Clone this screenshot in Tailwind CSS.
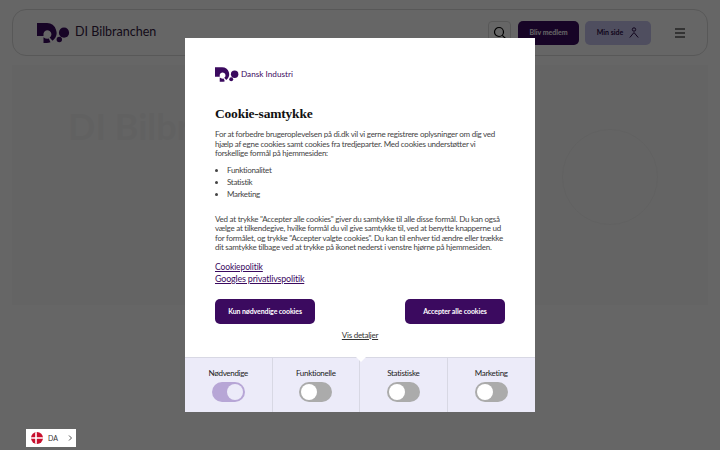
<!DOCTYPE html>
<html lang="da">
<head>
    <meta charset="UTF-8">
    <title>DI Bilbranchen</title>
    <script src="https://cdn.jsdelivr.net/npm/@tailwindcss/browser@4"></script>
</head>
<body class="bg-white h-[450px] overflow-hidden font-['Lato',sans-serif]">
    <!-- Page behind the dialog -->
    <div class="px-3 pt-[9px]">
        <header class="h-[47px] border border-[#dcdcdc] rounded-[14px] flex items-center pl-[24px] pr-[20px]">
            <svg class="w-[33px] h-[20px] text-[#3b0a5f]" viewBox="0 0 33 20" fill="currentColor">
                <path fill-rule="evenodd" d="M0 0H9.5A9.8 9.8 0 0 1 15.5 17.7L12.6 14.6A4 4 0 1 0 6.5 10.5V13H0ZM6.5 14.2A6.5 6.5 0 0 0 11.8 15.6L13.5 19.2A10 10 0 0 1 9.5 20H6.5Z"/>
                <circle cx="27" cy="9.7" r="5.1"/>
                <circle cx="22.3" cy="16.5" r="2.7"/>
            </svg>
            <span class="ml-[5px] text-[12.5px] text-[#33203f]">DI Bilbranchen</span>
            <div class="ml-auto flex items-center">
                <div class="w-[23px] h-[23px] mr-[7px] border border-[#dcdcdc] rounded flex items-center justify-center">
                    <svg class="w-[14px] h-[14px] text-black" viewBox="0 0 14 14" fill="none" stroke="currentColor" stroke-width="1.2">
                        <circle cx="6" cy="6" r="4.5"/>
                        <path d="M9.3 9.3L13 13"/>
                    </svg>
                </div>
                <button class="w-[61px] h-[24px] rounded-[5px] bg-[#3b0a5f] text-white text-[7px] font-bold">Bliv medlem</button>
                <button class="w-[66px] h-[24px] ml-[6px] rounded-[5px] bg-[#c5c3ee] text-[#2a0a45] text-[7px] font-bold flex items-center justify-center gap-[6px]">
                    Min side
                    <svg class="w-[10px] h-[11px]" viewBox="0 0 10 11" fill="none" stroke="currentColor" stroke-width="1">
                        <circle cx="5" cy="2.5" r="1.7"/>
                        <path d="M0.8 10.5L5 5.5L9.2 10.5"/>
                    </svg>
                </button>
                <svg class="w-[10px] h-[10px] ml-[24px] mr-[2px] text-black" viewBox="0 0 10 10" stroke="currentColor" stroke-width="1.2">
                    <path d="M0 1H10M0 5H10M0 9H10"/>
                </svg>
            </div>
        </header>
        <section class="mt-[9px] h-[240px] bg-[#fafafa] pl-[56px] pt-[34px] flex justify-between">
            <h1 class="text-[36px] text-[#f3f3f3] font-bold">DI Bilbranchen</h1>
            <div class="w-[96px] h-[96px] mr-[50px] mt-[30px] rounded-full border border-[#f3f3f3]"></div>
        </section>
    </div>

    <!-- Overlay -->
    <div class="absolute inset-0 bg-black/60"></div>

    <!-- Cookie dialog -->
    <div class="absolute left-[185px] top-[38px] w-[350px] h-[374px] bg-white flex flex-col">
        <div class="px-[30px] pt-[29px] flex-1">
            <div class="flex items-center">
                <svg class="w-[24px] h-[15px] text-[#3b0a5f]" viewBox="0 0 33 20" fill="currentColor">
                    <path fill-rule="evenodd" d="M0 0H9.5A9.8 9.8 0 0 1 15.5 17.7L12.6 14.6A4 4 0 1 0 6.5 10.5V13H0ZM6.5 14.2A6.5 6.5 0 0 0 11.8 15.6L13.5 19.2A10 10 0 0 1 9.5 20H6.5Z"/>
                    <circle cx="27" cy="9.7" r="5.1"/>
                    <circle cx="22.3" cy="16.5" r="2.7"/>
                </svg>
                <span class="ml-[2px] text-[8.2px] text-[#3b0a5f]">Dansk Industri</span>
            </div>
            <h2 class="mt-[22px] text-[13.5px] tracking-[-0.2px] leading-[20px] font-bold text-[#111] font-['Liberation_Serif',serif]">Cookie-samtykke</h2>
            <p class="mt-[6px] text-[8px] tracking-[-0.25px] leading-[9.5px] text-[#444]">For at forbedre brugeroplevelsen på di.dk vil vi gerne registrere oplysninger om dig ved hjælp af egne cookies samt cookies fra tredjeparter. Med cookies understøtter vi forskellige formål på hjemmesiden:</p>
            <ul class="mt-[5px] text-[8px] tracking-[-0.3px] leading-[12px] text-[#444] list-disc pl-[12px]">
                <li>Funktionalitet</li>
                <li>Statistik</li>
                <li>Marketing</li>
            </ul>
            <p class="mt-[15px] text-[8px] tracking-[-0.25px] leading-[9.5px] text-[#444]">Ved at trykke "Accepter alle cookies" giver du samtykke til alle disse formål. Du kan også vælge at tilkendegive, hvilke formål du vil give samtykke til, ved at benytte knapperne ud for formålet, og trykke "Accepter valgte cookies". Du kan til enhver tid ændre eller trække dit samtykke tilbage ved at trykke på ikonet nederst i venstre hjørne på hjemmesiden.</p>
            <a class="block mt-[9px] text-[8.5px] tracking-[-0.1px] leading-[11px] text-[#3b0a5f] underline">Cookiepolitik</a>
            <a class="block text-[9px] tracking-[-0.2px] leading-[11px] text-[#3b0a5f] underline">Googles privatlivspolitik</a>
            <div class="mt-[15px] flex justify-between">
                <button class="w-[100px] h-[25px] rounded-[5px] bg-[#3b0a5f] text-white text-[7px] tracking-[-0.1px] font-bold">Kun nødvendige cookies</button>
                <button class="w-[100px] h-[25px] rounded-[5px] bg-[#3b0a5f] text-white text-[7px] tracking-[-0.1px] font-bold">Accepter alle cookies</button>
            </div>
            <a class="block mt-[6px] text-center text-[8px] tracking-[-0.25px] leading-[11px] text-[#333] underline">Vis detaljer</a>
        </div>

        <!-- Consent categories -->
        <div class="relative h-[55px] bg-[#ecebf9] border-t border-[#d8d8e4] grid grid-cols-4">
            <div class="absolute left-[171px] top-[-1px] w-0 h-0 border-x-[5px] border-x-transparent border-t-[5px] border-t-white"></div>
            <div class="flex flex-col items-center pt-[9px] gap-[3px] border-r border-[#d8d8e4]">
                <span class="text-[8px] tracking-[-0.3px] leading-[12px] text-[#222]">Nødvendige</span>
                <div class="w-[33px] h-[20px] rounded-full bg-[#b7a6d6] flex items-center justify-end pr-[2px]">
                    <div class="w-[16px] h-[16px] rounded-full bg-[#ecebf9]"></div>
                </div>
            </div>
            <div class="flex flex-col items-center pt-[9px] gap-[3px] border-r border-[#d8d8e4]">
                <span class="text-[8px] tracking-[-0.3px] leading-[12px] text-[#222]">Funktionelle</span>
                <div class="w-[33px] h-[20px] rounded-full bg-[#ababab] flex items-center pl-[2px]">
                    <div class="w-[16px] h-[16px] rounded-full bg-white"></div>
                </div>
            </div>
            <div class="flex flex-col items-center pt-[9px] gap-[3px] border-r border-[#d8d8e4]">
                <span class="text-[8px] tracking-[-0.3px] leading-[12px] text-[#222]">Statistiske</span>
                <div class="w-[33px] h-[20px] rounded-full bg-[#ababab] flex items-center pl-[2px]">
                    <div class="w-[16px] h-[16px] rounded-full bg-white"></div>
                </div>
            </div>
            <div class="flex flex-col items-center pt-[9px] gap-[3px]">
                <span class="text-[8px] tracking-[-0.3px] leading-[12px] text-[#222]">Marketing</span>
                <div class="w-[33px] h-[20px] rounded-full bg-[#ababab] flex items-center pl-[2px]">
                    <div class="w-[16px] h-[16px] rounded-full bg-white"></div>
                </div>
            </div>
        </div>
    </div>

    <!-- Language switcher -->
    <div class="absolute left-[26px] top-[429px] w-[50px] h-[18px] bg-white flex items-center pl-[5px]">
        <svg class="w-[12px] h-[12px]" viewBox="0 0 12 12">
            <clipPath id="flag"><circle cx="6" cy="6" r="6"/></clipPath>
            <g clip-path="url(#flag)">
                <rect width="12" height="12" fill="#c8102e"/>
                <path d="M0 6H12M5 0V12" stroke="#fff" stroke-width="1.6"/>
            </g>
        </svg>
        <span class="ml-[5px] text-[7px] text-[#333]">DA</span>
        <svg class="w-[4px] h-[6px] ml-[10px] text-[#555]" viewBox="0 0 4 6" fill="none" stroke="currentColor" stroke-width="1">
            <path d="M1 0.5L3.5 3L1 5.5"/>
        </svg>
    </div>
</body>
</html>
